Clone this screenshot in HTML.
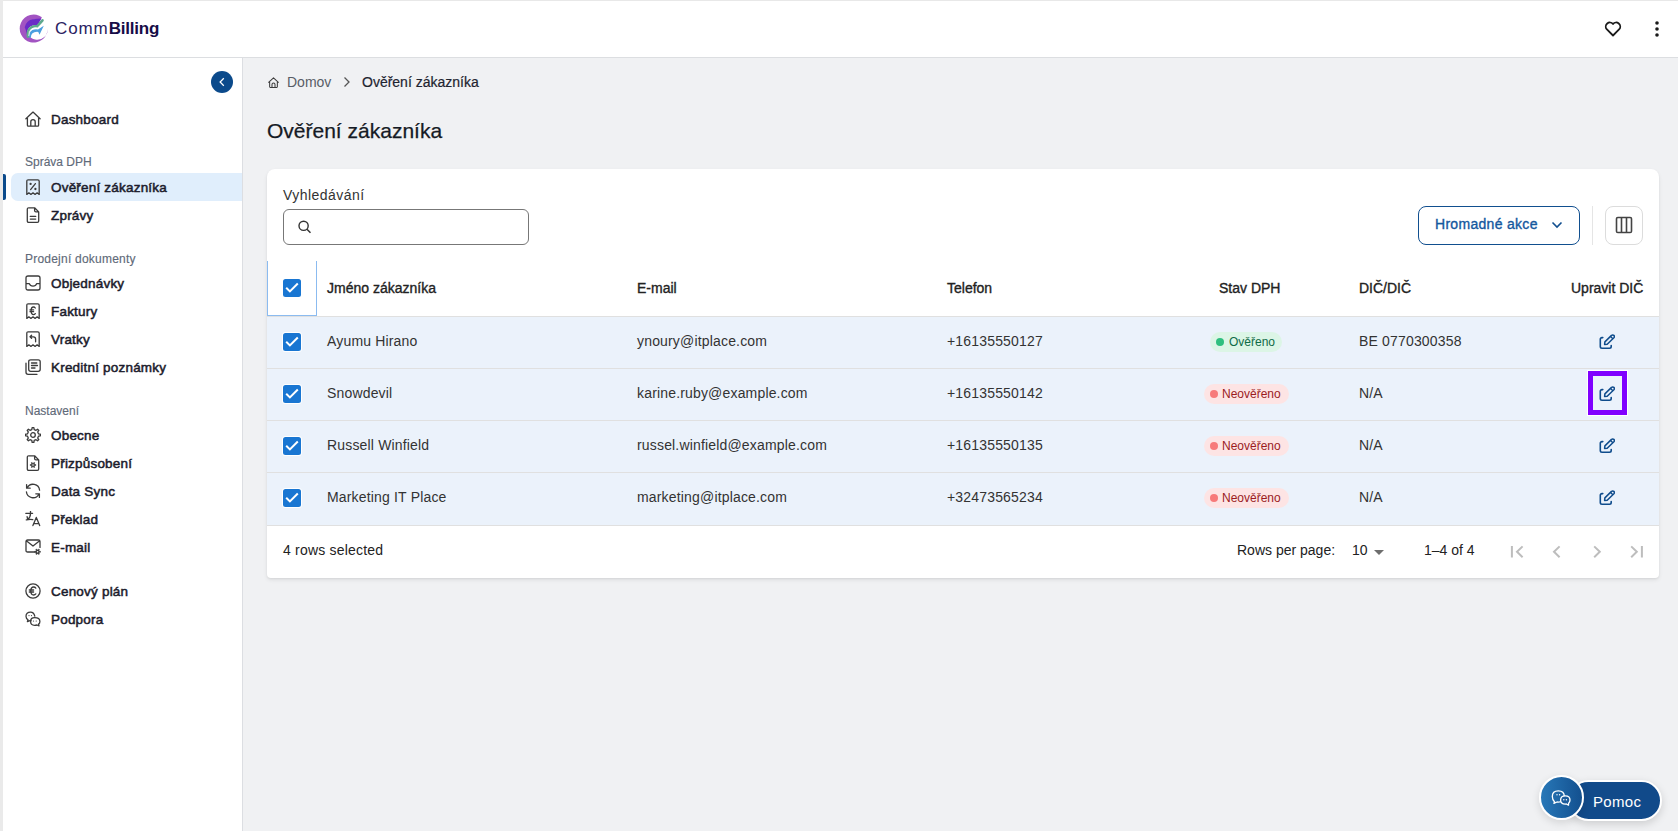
<!DOCTYPE html>
<html><head><meta charset="utf-8">
<style>
*{box-sizing:border-box;margin:0;padding:0}
html,body{width:1678px;height:831px;overflow:hidden;background:#f0f1f3;font-family:"Liberation Sans",sans-serif;color:#222}
.abs{position:absolute}
#lstrip{left:0;top:0;width:3px;height:831px;background:#eaeaea}
#tstrip{left:0;top:0;width:1678px;height:1px;background:#e8e8e8}
#header{left:3px;top:1px;width:1675px;height:56px;background:#fff}
#hline{left:3px;top:57px;width:1675px;height:1px;background:#dcdee1}
#sidebar{left:3px;top:58px;width:239px;height:773px;background:#fff}
#sline{left:242px;top:58px;width:1px;height:773px;background:#dcdee2}
.mi{position:absolute;left:51px;height:28px;line-height:29px;font-size:13.5px;font-weight:400;color:#1b1b2b;-webkit-text-stroke:0.5px #1b1b2b;letter-spacing:0.2px;white-space:nowrap}
.mic{position:absolute;left:25px;width:16px;height:16px}
.lab{position:absolute;left:25px;font-size:12px;line-height:18px;color:#5f6a79;-webkit-text-stroke:0.15px #5f6a79;white-space:nowrap}
.txt{position:absolute;white-space:nowrap}
.hd{font-size:14px;font-weight:400;color:#222;-webkit-text-stroke:0.35px #222;letter-spacing:0px;line-height:22px}
.cell{font-size:14px;color:#333;line-height:20px;letter-spacing:0.17px}
.cb{position:absolute;width:18px;height:18px;border-radius:2.5px;background:#1976d2;box-shadow:0 0 0 1px #fff}
.row{position:absolute;left:267px;width:1392px;height:52px;background:#ebf2fb;border-bottom:1px solid #e0e0e0}
.chip{position:absolute;height:20px;border-radius:10px;font-size:12px;line-height:20px;white-space:nowrap}
.chip i{position:absolute;top:6px;width:8px;height:8px;border-radius:4px}
.edit{position:absolute;left:1599px;width:16px;height:16px}
</style></head><body>
<div id="tstrip" class="abs"></div>
<div id="lstrip" class="abs"></div>
<div id="header" class="abs"></div>
<div id="hline" class="abs"></div>
<div id="sidebar" class="abs"></div>
<div id="sline" class="abs"></div>

<!-- logo -->
<svg class="abs" style="left:16px;top:12px" width="34" height="34" viewBox="0 0 34 34">
  <path d="M25.9 5.2 A14 14 0 1 0 31.7 17.3 A10.4 10.4 0 1 1 24.6 7.6 Z" fill="#a254c2"/>
  <path d="M8.7 15.2 Q10.5 8.2 17 7.3 Q21 6.8 25.4 6.6 L21.4 13.4 Q17.5 12.9 14.5 14.4 Q11.3 16.5 10.8 22.5 Q10.2 18 8.7 15.2 Z" fill="#6b2bc7"/>
  <path d="M11.9 24.6 Q11.3 17.6 15.3 15.4 Q18 14 21.2 14.4 L26.5 8.3" fill="none" stroke="#5ea98d" stroke-width="2.6" stroke-linecap="round"/>
  <path d="M13.1 25.4 Q12.8 19.8 16.4 17.9 Q19 16.9 22 17.4 L27.8 13.8 L23.5 22.8 L22.3 19.9 Q18.4 19.5 16.2 21.5 Q14.9 23 14.9 25.8 Z" fill="#4b9fe0"/>
  <path d="M12.7 24 Q12.4 18.6 15.9 16.7 Q18.5 15.4 21.6 15.9 L27 11.2" fill="none" stroke="#fff" stroke-width="0.7"/>
</svg>
<div class="txt" style="left:55px;top:17px;font-size:17px;line-height:24px;color:#2a2262"><span style="letter-spacing:0.9px">Comm</span><b style="color:#170d47;letter-spacing:-0.2px">Billing</b></div>

<!-- header right icons -->
<svg class="abs" style="left:1603px;top:19px" width="20" height="20" viewBox="0 0 20 20"><path d="M10 16.5 L3.7 10.2 A3.6 3.6 0 0 1 10 5 A3.6 3.6 0 0 1 16.3 10.2 Z" fill="none" stroke="#1a1a1a" stroke-width="1.8" stroke-linejoin="round"/></svg>
<svg class="abs" style="left:1652px;top:19px" width="10" height="20" viewBox="0 0 10 20"><circle cx="5" cy="4" r="1.8" fill="#1a1a1a"/><circle cx="5" cy="10" r="1.8" fill="#1a1a1a"/><circle cx="5" cy="16" r="1.8" fill="#1a1a1a"/></svg>

<!-- collapse btn -->
<div class="abs" style="left:211px;top:71px;width:22px;height:22px;border-radius:11px;background:#0b4a8b"></div>
<svg class="abs" style="left:211px;top:71px" width="22" height="22" viewBox="0 0 22 22"><path d="M12.8 7.3 L9.1 11 L12.8 14.7" fill="none" stroke="#fff" stroke-width="1.25"/></svg>

<!-- sidebar -->
<div id="menu">
<div class="mi" style="top:105px">Dashboard</div>
<div class="lab" style="top:153px">Správa DPH</div>
<div class="abs" style="left:11px;top:173px;width:231px;height:28px;background:#e0eefc;border-radius:7px 0 0 7px"></div>
<div class="abs" style="left:3px;top:174px;width:3px;height:26px;background:#0b4a8b;border-radius:0 2px 2px 0"></div>
<div class="mi" style="top:173px">Ověření zákazníka</div>
<div class="mi" style="top:201px">Zprávy</div>
<div class="lab" style="top:250px;letter-spacing:0.22px">Prodejní dokumenty</div>
<div class="mi" style="top:269px">Objednávky</div>
<div class="mi" style="top:297px">Faktury</div>
<div class="mi" style="top:325px">Vratky</div>
<div class="mi" style="top:353px">Kreditní poznámky</div>
<div class="lab" style="top:402px">Nastavení</div>
<div class="mi" style="top:421px">Obecne</div>
<div class="mi" style="top:449px">Přizpůsobení</div>
<div class="mi" style="top:477px">Data Sync</div>
<div class="mi" style="top:505px">Překlad</div>
<div class="mi" style="top:533px">E-mail</div>
<div class="mi" style="top:577px">Cenový plán</div>
<div class="mi" style="top:605px">Podpora</div>
</div>

<!--ICONS-->
<svg class="abs" style="left:25px;top:111px" width="16" height="16" viewBox="0 0 16 16"><path d="M0.9 7.7 L8 1.1 L15.1 7.7 M2.4 6.3 V14.3 Q2.4 15.2 3.3 15.2 H12.7 Q13.6 15.2 13.6 14.3 V6.3 M5.8 15.2 V10.8 A2.2 2.2 0 0 1 10.2 10.8 V15.2" fill="none" stroke="#3b3b3b" stroke-width="1.3" stroke-linecap="round" stroke-linejoin="round"/></svg>
<svg class="abs" style="left:25px;top:179px" width="16" height="16" viewBox="0 0 16 16"><path d="M1.8 15.4 V2.2 Q1.8 0.8 3.2 0.8 H12.8 Q14.2 0.8 14.2 2.2 V15.4 L12.13 13.80 L10.07 15.40 L8.00 13.80 L5.93 15.40 L3.87 13.80 L1.80 15.40" fill="none" stroke="#3b3b3b" stroke-width="1.3" stroke-linecap="round" stroke-linejoin="round"/><path d="M5.6 10.6 L10.4 4.6" fill="none" stroke="#3b3b3b" stroke-width="1.3" stroke-linecap="round" stroke-linejoin="round"/><circle cx="5.6" cy="4.9" r="1.15" fill="#3b3b3b"/><circle cx="10.4" cy="10" r="1.15" fill="#3b3b3b"/></svg>
<svg class="abs" style="left:25px;top:207px" width="16" height="16" viewBox="0 0 16 16"><path d="M2.3 2.2 Q2.3 0.8 3.7 0.8 H9.6 L13.7 4.9 V13.9 Q13.7 15.3 12.3 15.3 H3.7 Q2.3 15.3 2.3 13.9 Z M9.6 0.8 V3.6 Q9.6 4.9 10.9 4.9 H13.7 M5.3 9.4 H10.7 M5.3 12.1 H10.7" fill="none" stroke="#3b3b3b" stroke-width="1.3" stroke-linecap="round" stroke-linejoin="round"/></svg>
<svg class="abs" style="left:25px;top:275px" width="16" height="16" viewBox="0 0 16 16"><path d="M1 3 Q1 1 3 1 H13 Q15 1 15 3 V13 Q15 15 13 15 H3 Q1 15 1 13 Z M1 8.6 H4.2 Q5.2 11.2 8 11.2 Q10.8 11.2 11.8 8.6 H15" fill="none" stroke="#3b3b3b" stroke-width="1.3" stroke-linecap="round" stroke-linejoin="round"/></svg>
<svg class="abs" style="left:25px;top:303px" width="16" height="16" viewBox="0 0 16 16"><path d="M1.8 15.4 V2.2 Q1.8 0.8 3.2 0.8 H12.8 Q14.2 0.8 14.2 2.2 V15.4 L12.13 13.80 L10.07 15.40 L8.00 13.80 L5.93 15.40 L3.87 13.80 L1.80 15.40" fill="none" stroke="#3b3b3b" stroke-width="1.3" stroke-linecap="round" stroke-linejoin="round"/><path d="M10.3 5 Q9.6 4 8.5 4 Q6.1 4 6.1 7.8 Q6.1 11.6 8.5 11.6 Q9.6 11.6 10.3 10.6 M5 6.9 H8.6 M5 8.7 H8.6" fill="none" stroke="#3b3b3b" stroke-width="1.3" stroke-linecap="round" stroke-linejoin="round"/></svg>
<svg class="abs" style="left:25px;top:331px" width="16" height="16" viewBox="0 0 16 16"><path d="M1.8 15.4 V2.2 Q1.8 0.8 3.2 0.8 H12.8 Q14.2 0.8 14.2 2.2 V15.4 L12.13 13.80 L10.07 15.40 L8.00 13.80 L5.93 15.40 L3.87 13.80 L1.80 15.40" fill="none" stroke="#3b3b3b" stroke-width="1.3" stroke-linecap="round" stroke-linejoin="round"/><path d="M6.6 4.2 L5 5.8 L6.6 7.4 M5 5.8 H8.4 Q10.6 5.8 10.6 8 V10.8" fill="none" stroke="#3b3b3b" stroke-width="1.3" stroke-linecap="round" stroke-linejoin="round"/></svg>
<svg class="abs" style="left:25px;top:359px" width="16" height="16" viewBox="0 0 16 16"><path d="M5.7 0.8 H13.2 Q15.2 0.8 15.2 2.8 V10.3 Q15.2 12.3 13.2 12.3 H5.7 Q3.7 12.3 3.7 10.3 V2.8 Q3.7 0.8 5.7 0.8 Z M6.5 4 H11.8 M6.5 6.5 H12.5 M6.5 9 H10" fill="none" stroke="#3b3b3b" stroke-width="1.3" stroke-linecap="round" stroke-linejoin="round"/><path d="M1 4.2 V13.2 Q1 15.3 3.1 15.3 H12" fill="none" stroke="#3b3b3b" stroke-width="1.3" stroke-linecap="round" stroke-linejoin="round"/></svg>
<svg class="abs" style="left:25px;top:427px" width="16" height="16" viewBox="0 0 16 16"><path d="M13.47 6.80 L15.35 7.13 L15.35 8.87 L13.47 9.20 L12.72 11.02 L13.81 12.58 L12.58 13.81 L11.02 12.72 L9.20 13.47 L8.87 15.35 L7.13 15.35 L6.80 13.47 L4.98 12.72 L3.42 13.81 L2.19 12.58 L3.28 11.02 L2.53 9.20 L0.65 8.87 L0.65 7.13 L2.53 6.80 L3.28 4.98 L2.19 3.42 L3.42 2.19 L4.98 3.28 L6.80 2.53 L7.13 0.65 L8.87 0.65 L9.20 2.53 L11.02 3.28 L12.58 2.19 L13.81 3.42 L12.72 4.98 Z" fill="none" stroke="#3b3b3b" stroke-width="1.3" stroke-linecap="round" stroke-linejoin="round"/><circle cx="8" cy="8" r="2.3" fill="none" stroke="#3b3b3b" stroke-width="1.3" stroke-linecap="round" stroke-linejoin="round"/></svg>
<svg class="abs" style="left:25px;top:455px" width="16" height="16" viewBox="0 0 16 16"><path d="M2.3 2.2 Q2.3 0.8 3.7 0.8 H9.6 L13.7 4.9 V13.9 Q13.7 15.3 12.3 15.3 H3.7 Q2.3 15.3 2.3 13.9 Z M9.6 0.8 V3.6 Q9.6 4.9 10.9 4.9 H13.7" fill="none" stroke="#3b3b3b" stroke-width="1.3" stroke-linecap="round" stroke-linejoin="round"/><path d="M9.82 9.46 L10.77 9.56 L10.77 10.44 L9.82 10.54 L9.38 11.31 L9.76 12.18 L9.00 12.61 L8.44 11.85 L7.56 11.85 L7.00 12.61 L6.24 12.18 L6.62 11.31 L6.18 10.54 L5.23 10.44 L5.23 9.56 L6.18 9.46 L6.62 8.69 L6.24 7.82 L7.00 7.39 L7.56 8.15 L8.44 8.15 L9.00 7.39 L9.76 7.82 L9.38 8.69 Z" fill="#3b3b3b" stroke="#3b3b3b" stroke-width="0.6"/><circle cx="8" cy="10" r="0.8" fill="#fff"/></svg>
<svg class="abs" style="left:25px;top:483px" width="16" height="16" viewBox="0 0 16 16"><path d="M14.6 7.2 A6.6 6.6 0 0 0 2.2 4.8 M1.4 8.8 A6.6 6.6 0 0 0 13.8 11.2 M1.6 1.6 V5.2 H5.2 M14.4 14.4 V10.8 H10.8" fill="none" stroke="#3b3b3b" stroke-width="1.3" stroke-linecap="round" stroke-linejoin="round"/></svg>
<svg class="abs" style="left:25px;top:511px" width="16" height="16" viewBox="0 0 16 16"><path d="M0.8 2.3 H7.6 M5.5 0.2 V2.3 Q5.6 6.3 2.6 8.4 M2.1 5.6 L2.6 8 M1.3 8.9 Q4.5 8.1 7.8 8.6" fill="none" stroke="#3b3b3b" stroke-width="1.3" stroke-linecap="round" stroke-linejoin="round"/><path d="M7.9 14.6 L11.3 6.4 L14.7 14.6 M9 12.6 H13.6" fill="none" stroke="#3b3b3b" stroke-width="1.3" stroke-linecap="round" stroke-linejoin="round"/></svg>
<svg class="abs" style="left:25px;top:539px" width="16" height="16" viewBox="0 0 16 16"><path d="M10.2 13 H2.6 Q1 13 1 11.4 V2.6 Q1 1 2.6 1 H13.4 Q15 1 15 2.6 V8.4 M1.3 1.8 L8 7 L14.7 1.8" fill="none" stroke="#3b3b3b" stroke-width="1.3" stroke-linecap="round" stroke-linejoin="round"/><path d="M14.42 12.26 L15.46 12.35 L15.46 13.25 L14.42 13.34 L13.98 14.11 L14.43 15.05 L13.64 15.51 L13.04 14.65 L12.16 14.65 L11.56 15.51 L10.77 15.05 L11.22 14.11 L10.78 13.34 L9.74 13.25 L9.74 12.35 L10.78 12.26 L11.22 11.49 L10.77 10.55 L11.56 10.09 L12.16 10.95 L13.04 10.95 L13.64 10.09 L14.43 10.55 L13.98 11.49 Z" fill="#3b3b3b" stroke="#3b3b3b" stroke-width="0.6"/><circle cx="12.6" cy="12.8" r="0.8" fill="#fff"/></svg>
<svg class="abs" style="left:25px;top:583px" width="16" height="16" viewBox="0 0 16 16"><circle cx="8" cy="8" r="7.1" fill="none" stroke="#3b3b3b" stroke-width="1.3" stroke-linecap="round" stroke-linejoin="round"/><path d="M10.8 5.1 Q10 4 8.7 4 Q5.8 4 5.8 8 Q5.8 12 8.7 12 Q10 12 10.8 10.9 M4.3 7 H8.6 M4.3 9 H8.6" fill="none" stroke="#3b3b3b" stroke-width="1.3" stroke-linecap="round" stroke-linejoin="round"/></svg>
<svg class="abs" style="left:25px;top:611px" width="16" height="16" viewBox="0 0 16 16"><path d="M9.8 5.2 Q8.8 1.2 5.6 1.2 Q1 1.2 1 5.2 Q1 7.6 3 8.8 L2.4 10.6 L5 9.6 Q5.6 9.7 6.1 9.7" fill="none" stroke="#3b3b3b" stroke-width="1.3" stroke-linecap="round" stroke-linejoin="round"/><path d="M9.6 6.6 Q14.9 6.6 14.9 10.4 Q14.9 12.2 13.6 13.1 L14 14.9 L12 14 Q10.9 14.3 9.6 14.3 Q5.6 14.3 5.6 10.4 Q5.6 6.6 9.6 6.6 Z" fill="none" stroke="#3b3b3b" stroke-width="1.3" stroke-linecap="round" stroke-linejoin="round"/><circle cx="4" cy="4.6" r="0.6" fill="#3b3b3b"/><circle cx="6.5" cy="4.6" r="0.6" fill="#3b3b3b"/><circle cx="8.5" cy="10" r="0.6" fill="#3b3b3b"/><circle cx="11.2" cy="10" r="0.6" fill="#3b3b3b"/></svg>
<!--/ICONS-->
<!-- breadcrumb -->
<svg class="abs" style="left:268px;top:77px" width="11" height="11" viewBox="0 0 16 16"><path d="M0.9 7.7 L8 1.1 L15.1 7.7 M2.4 6.3 V14.3 Q2.4 15.2 3.3 15.2 H12.7 Q13.6 15.2 13.6 14.3 V6.3 M5.8 15.2 V10.8 A2.2 2.2 0 0 1 10.2 10.8 V15.2" fill="none" stroke="#3a3a3a" stroke-width="1.5" stroke-linecap="round" stroke-linejoin="round"/></svg>
<div class="txt" style="left:287px;top:72px;font-size:14px;line-height:20px;color:#585d66">Domov</div>
<svg class="abs" style="left:341px;top:75px" width="12" height="14" viewBox="0 0 12 14"><path d="M3.5 2.5 L8 7 L3.5 11.5" fill="none" stroke="#555" stroke-width="1.3"/></svg>
<div class="txt" style="left:362px;top:72px;font-size:14px;line-height:20px;color:#1e2430;-webkit-text-stroke:0.2px #1e2430">Ověření zákazníka</div>
<div class="txt" style="left:267px;top:118px;font-size:21px;line-height:26px;color:#151a24;-webkit-text-stroke:0.25px #151a24">Ověření zákazníka</div>

<!-- card -->
<div class="abs" style="left:267px;top:169px;width:1392px;height:409px;background:#fff;border-radius:8px 8px 4px 4px;box-shadow:0 2px 4px rgba(0,0,0,0.08),0 1px 2px rgba(0,0,0,0.05)"></div>
<div class="txt" style="left:283px;top:185px;font-size:14px;line-height:20px;color:#333;letter-spacing:0.45px">Vyhledávání</div>
<div class="abs" style="left:283px;top:209px;width:246px;height:36px;border:1px solid #777;border-radius:6px;background:#fff"></div>
<svg class="abs" style="left:296px;top:218px" width="18" height="18" viewBox="0 0 18 18"><circle cx="7.6" cy="7.8" r="4.6" fill="none" stroke="#333" stroke-width="1.4"/><path d="M11 11.2 L14.5 14.7" stroke="#333" stroke-width="1.5"/></svg>

<div class="abs" style="left:1418px;top:206px;width:162px;height:39px;border:1.5px solid #114f8f;border-radius:8px"></div>
<div class="txt" style="left:1435px;top:214px;font-size:14px;line-height:20px;color:#14589e;-webkit-text-stroke:0.35px #14589e;letter-spacing:0.3px">Hromadné akce</div>
<svg class="abs" style="left:1550px;top:219px" width="14" height="12" viewBox="0 0 14 12"><path d="M2.5 3.5 L7 8 L11.5 3.5" fill="none" stroke="#114f8f" stroke-width="1.6"/></svg>
<div class="abs" style="left:1592px;top:206px;width:1px;height:39px;background:#e5e5e5"></div>
<div class="abs" style="left:1605px;top:206px;width:38px;height:39px;border:1px solid #dcdcdc;border-radius:8px"></div>
<svg class="abs" style="left:1614px;top:215px" width="20" height="20" viewBox="0 0 20 20"><rect x="2.5" y="2.5" width="15" height="15" rx="1.3" fill="none" stroke="#444" stroke-width="1.6"/><path d="M7.5 2.5 V17.5 M12.5 2.5 V17.5" stroke="#444" stroke-width="1.6"/></svg>

<!-- table header -->
<div class="abs" style="left:267px;top:261px;width:50px;height:55px;border:1px solid #8bbbf0;border-top:none"></div>
<div class="abs" style="left:267px;top:316px;width:1392px;height:1px;background:#e0e0e0"></div>
<div class="cb" style="left:283px;top:279px"></div>
<div class="txt hd" style="left:327px;top:277px">Jméno zákazníka</div>
<div class="txt hd" style="left:637px;top:277px">E-mail</div>
<div class="txt hd" style="left:947px;top:277px">Telefon</div>
<div class="txt hd" style="left:1219px;top:277px">Stav DPH</div>
<div class="txt hd" style="left:1359px;top:277px">DIČ/DIČ</div>
<div class="txt hd" style="left:1571px;top:277px">Upravit DIČ</div>

<!-- rows -->
<div class="row" style="top:317px"></div>
<div class="row" style="top:369px"></div>
<div class="row" style="top:421px"></div>
<div class="row" style="top:473px;height:53px"></div>

<svg class="abs" style="left:283px;top:279px" width="18" height="18" viewBox="0 0 18 18"><path d="M3.2 8.7 L6.9 12.4 L14.8 4.5" fill="none" stroke="#fff" stroke-width="2"/></svg>
<div class="cb" style="left:283px;top:333px"></div>
<svg class="abs" style="left:283px;top:333px" width="18" height="18" viewBox="0 0 18 18"><path d="M3.2 8.7 L6.9 12.4 L14.8 4.5" fill="none" stroke="#fff" stroke-width="2"/></svg>
<div class="txt cell" style="left:327px;top:331px">Ayumu Hirano</div>
<div class="txt cell" style="left:637px;top:331px">ynoury@itplace.com</div>
<div class="txt cell" style="left:947px;top:331px">+16135550127</div>
<div class="chip" style="left:1210px;top:332px;width:72px;background:#dcf5e6;color:#0f6b47"><i style="left:6px;background:#2fbf7f"></i><span style="position:absolute;left:19px">Ověřeno</span></div>
<div class="txt cell" style="left:1359px;top:331px">BE 0770300358</div>
<svg class="edit" style="top:334px" width="16" height="16" viewBox="0 0 16 16"><path d="M3.8 3.6 H3 A1.7 1.7 0 0 0 1.3 5.3 V12.6 A1.7 1.7 0 0 0 3 14.3 H10.5 A1.7 1.7 0 0 0 12.2 12.6 V11.6" fill="none" stroke="#0f4c8c" stroke-width="1.6" stroke-linecap="round"/><path d="M5.6 10.4 L5.9 7.9 L12.5 1.4 A1.65 1.65 0 0 1 14.9 3.7 L8.2 10.2 Z M11.5 2.5 L13.9 4.8" fill="none" stroke="#0f4c8c" stroke-width="1.5" stroke-linejoin="round"/></svg>
<div class="cb" style="left:283px;top:385px"></div>
<svg class="abs" style="left:283px;top:385px" width="18" height="18" viewBox="0 0 18 18"><path d="M3.2 8.7 L6.9 12.4 L14.8 4.5" fill="none" stroke="#fff" stroke-width="2"/></svg>
<div class="txt cell" style="left:327px;top:383px">Snowdevil</div>
<div class="txt cell" style="left:637px;top:383px">karine.ruby@example.com</div>
<div class="txt cell" style="left:947px;top:383px">+16135550142</div>
<div class="chip" style="left:1204px;top:384px;width:85px;background:#fde4e4;color:#9b1c1f"><i style="left:6px;background:#f77a7a"></i><span style="position:absolute;left:18px">Neověřeno</span></div>
<div class="txt cell" style="left:1359px;top:383px">N/A</div>
<svg class="edit" style="top:386px" width="16" height="16" viewBox="0 0 16 16"><path d="M3.8 3.6 H3 A1.7 1.7 0 0 0 1.3 5.3 V12.6 A1.7 1.7 0 0 0 3 14.3 H10.5 A1.7 1.7 0 0 0 12.2 12.6 V11.6" fill="none" stroke="#0f4c8c" stroke-width="1.6" stroke-linecap="round"/><path d="M5.6 10.4 L5.9 7.9 L12.5 1.4 A1.65 1.65 0 0 1 14.9 3.7 L8.2 10.2 Z M11.5 2.5 L13.9 4.8" fill="none" stroke="#0f4c8c" stroke-width="1.5" stroke-linejoin="round"/></svg>
<div class="cb" style="left:283px;top:437px"></div>
<svg class="abs" style="left:283px;top:437px" width="18" height="18" viewBox="0 0 18 18"><path d="M3.2 8.7 L6.9 12.4 L14.8 4.5" fill="none" stroke="#fff" stroke-width="2"/></svg>
<div class="txt cell" style="left:327px;top:435px">Russell Winfield</div>
<div class="txt cell" style="left:637px;top:435px">russel.winfield@example.com</div>
<div class="txt cell" style="left:947px;top:435px">+16135550135</div>
<div class="chip" style="left:1204px;top:436px;width:85px;background:#fde4e4;color:#9b1c1f"><i style="left:6px;background:#f77a7a"></i><span style="position:absolute;left:18px">Neověřeno</span></div>
<div class="txt cell" style="left:1359px;top:435px">N/A</div>
<svg class="edit" style="top:438px" width="16" height="16" viewBox="0 0 16 16"><path d="M3.8 3.6 H3 A1.7 1.7 0 0 0 1.3 5.3 V12.6 A1.7 1.7 0 0 0 3 14.3 H10.5 A1.7 1.7 0 0 0 12.2 12.6 V11.6" fill="none" stroke="#0f4c8c" stroke-width="1.6" stroke-linecap="round"/><path d="M5.6 10.4 L5.9 7.9 L12.5 1.4 A1.65 1.65 0 0 1 14.9 3.7 L8.2 10.2 Z M11.5 2.5 L13.9 4.8" fill="none" stroke="#0f4c8c" stroke-width="1.5" stroke-linejoin="round"/></svg>
<div class="cb" style="left:283px;top:489px"></div>
<svg class="abs" style="left:283px;top:489px" width="18" height="18" viewBox="0 0 18 18"><path d="M3.2 8.7 L6.9 12.4 L14.8 4.5" fill="none" stroke="#fff" stroke-width="2"/></svg>
<div class="txt cell" style="left:327px;top:487px">Marketing IT Place</div>
<div class="txt cell" style="left:637px;top:487px">marketing@itplace.com</div>
<div class="txt cell" style="left:947px;top:487px">+32473565234</div>
<div class="chip" style="left:1204px;top:488px;width:85px;background:#fde4e4;color:#9b1c1f"><i style="left:6px;background:#f77a7a"></i><span style="position:absolute;left:18px">Neověřeno</span></div>
<div class="txt cell" style="left:1359px;top:487px">N/A</div>
<svg class="edit" style="top:490px" width="16" height="16" viewBox="0 0 16 16"><path d="M3.8 3.6 H3 A1.7 1.7 0 0 0 1.3 5.3 V12.6 A1.7 1.7 0 0 0 3 14.3 H10.5 A1.7 1.7 0 0 0 12.2 12.6 V11.6" fill="none" stroke="#0f4c8c" stroke-width="1.6" stroke-linecap="round"/><path d="M5.6 10.4 L5.9 7.9 L12.5 1.4 A1.65 1.65 0 0 1 14.9 3.7 L8.2 10.2 Z M11.5 2.5 L13.9 4.8" fill="none" stroke="#0f4c8c" stroke-width="1.5" stroke-linejoin="round"/></svg>
<div class="abs" style="left:1587px;top:370px;width:41px;height:46px;border:1px solid #fff"></div>
<div class="abs" style="left:1588px;top:371px;width:39px;height:44px;border:5px solid #8000ff"></div>

<!-- footer -->
<div class="txt" style="left:283px;top:540px;font-size:14px;line-height:20px;color:#222;letter-spacing:0.2px">4 rows selected</div>
<div class="txt" style="left:1237px;top:540px;font-size:14px;line-height:20px;color:#222">Rows per page:</div>
<div class="txt" style="left:1352px;top:540px;font-size:14px;line-height:20px;color:#222">10</div>
<svg class="abs" style="left:1372px;top:548px" width="14" height="10" viewBox="0 0 14 10"><path d="M2 2 L7 7 L12 2 Z" fill="#6e6e6e"/></svg>
<div class="txt" style="left:1424px;top:540px;font-size:14px;line-height:20px;color:#222">1–4 of 4</div>

<svg class="abs" style="left:1500px;top:540px" width="160" height="24" viewBox="0 0 160 24"><g fill="none" stroke="#bdbdbd" stroke-width="2"><path d="M11.9 6 V17.6 M22.6 6.4 L17 11.8 L22.6 17.2"/><path d="M59.6 6.4 L54 11.8 L59.6 17.2"/><path d="M94.2 6.4 L99.8 11.8 L94.2 17.2"/><path d="M131.2 6.4 L136.8 11.8 L131.2 17.2 M141.9 6 V17.6"/></g></svg>
<!-- pomoc -->
<div class="abs" style="left:1568px;top:780px;width:94px;height:41px;border-radius:21px;background:#114a8a;border:2px solid #fff;box-shadow:0 3px 8px rgba(0,0,0,0.15)"></div>
<div class="abs" style="left:1539px;top:775px;width:45px;height:45px;border-radius:23px;background:linear-gradient(90deg,#2878b8,#13508f);border:2px solid #fff;box-shadow:0 3px 8px rgba(0,0,0,0.12)"></div>
<svg class="abs" style="left:1545px;top:782px" width="35" height="30" viewBox="0 0 35 30">
 <path d="M9.6 19.9 L8.9 21.3 L12 20 Q12.8 20.1 13.3 20.1 Q19.3 20.1 19.3 14.5 Q19.3 8.9 13.3 8.9 Q7.3 8.9 7.3 14.5 Q7.3 17.8 9.6 19.9 Z" fill="none" stroke="#fff" stroke-width="1.3" stroke-linejoin="round"/>
 <path d="M23.6 21.3 L23.5 23.2 L21.4 22 Q20.9 22.1 20.3 22.1 Q15.6 22.1 15.6 18 Q15.6 13.9 20.3 13.9 Q25 13.9 25 18 Q25 20 23.6 21.3 Z" fill="#1c5c9c" stroke="#fff" stroke-width="1.3" stroke-linejoin="round"/>
 <circle cx="12" cy="12.8" r="0.7" fill="#fff"/><circle cx="14.6" cy="12.8" r="0.7" fill="#fff"/>
 <circle cx="18.8" cy="17.8" r="0.7" fill="#fff"/><circle cx="21.4" cy="17.8" r="0.7" fill="#fff"/>
</svg>
<div class="txt" style="left:1593px;top:792px;font-size:15px;line-height:20px;color:#fff;letter-spacing:0.3px">Pomoc</div>
</body></html>
